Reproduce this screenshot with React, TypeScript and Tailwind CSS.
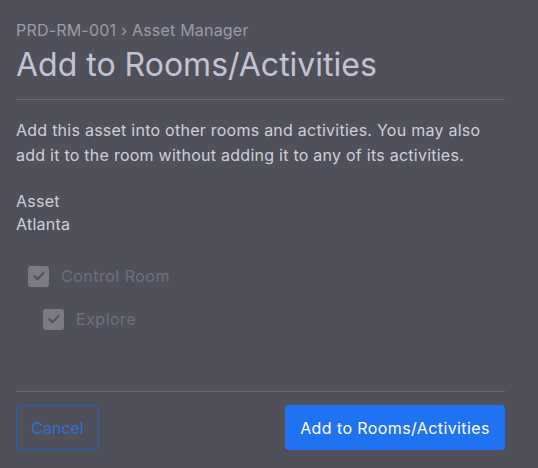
import React from "react";

function Check({ checked }: { checked: boolean }) {
  return (
    <span className="flex h-[21px] w-[21px] items-center justify-center rounded-[3px] bg-[#7b7b84]">
      {checked && (
        <svg width="14" height="14" viewBox="0 0 14 14" fill="none">
          <path d="M2.5 7.2 L5.6 10.2 L11.5 3.8" stroke="#4f5059" strokeWidth="2" strokeLinecap="square" />
        </svg>
      )}
    </span>
  );
}

export default function App() {
  return (
    <div
      className="flex h-[468px] w-[538px] flex-col bg-[#4f5059] pl-4 pr-[33px]"
      style={{ fontFamily: "Inter, 'Noto Sans', sans-serif" }}
    >
      <div className="pt-[20px] text-[16px] leading-[20px] tracking-[0.2px] text-[#9d9cab]">PRD-RM-001 › Asset Manager</div>
      <h1 className="mt-[6px] text-[32px] leading-[38px] font-normal text-[#c4c3d6]">Add to Rooms/Activities</h1>
      <div className="mt-[15px] h-px bg-[#6a6b6c]" />
      <p className="mt-[18px] text-[16px] leading-[25px] tracking-[0.25px] text-[#cfcfdc]">
        Add this asset into other rooms and activities. You may also add it to the room without adding it to any of its activities.
      </p>
      <div className="mt-[22px] text-[16px] leading-[23px] tracking-[0.25px] text-[#cfcfdc]">
        <div>Asset</div>
        <div>Atlanta</div>
      </div>
      <div className="mt-[28px] flex items-center gap-[12px] pl-[12px]">
        <Check checked />
        <span className="text-[16px] tracking-[0.5px] text-[#70707f]">Control Room</span>
      </div>
      <div className="mt-[19px] flex items-center gap-[12px] pl-[27px]">
        <Check checked />
        <span className="text-[16px] tracking-[0.5px] text-[#70707f]">Explore</span>
      </div>
      <div className="mt-auto h-px bg-[#6a6b6c]" />
      <div className="flex items-center justify-between pt-[13px] pb-[18px]">
        <button className="h-[45px] w-[83px] rounded-[4px] border border-[#2160c6] text-[16px] text-[#2a6fd8]">
          Cancel
        </button>
        <button className="h-[45px] w-[220px] rounded-[4px] bg-[#1f72f0] text-[16px] tracking-[0.4px] text-white">
          Add to Rooms/Activities
        </button>
      </div>
    </div>
  );
}
